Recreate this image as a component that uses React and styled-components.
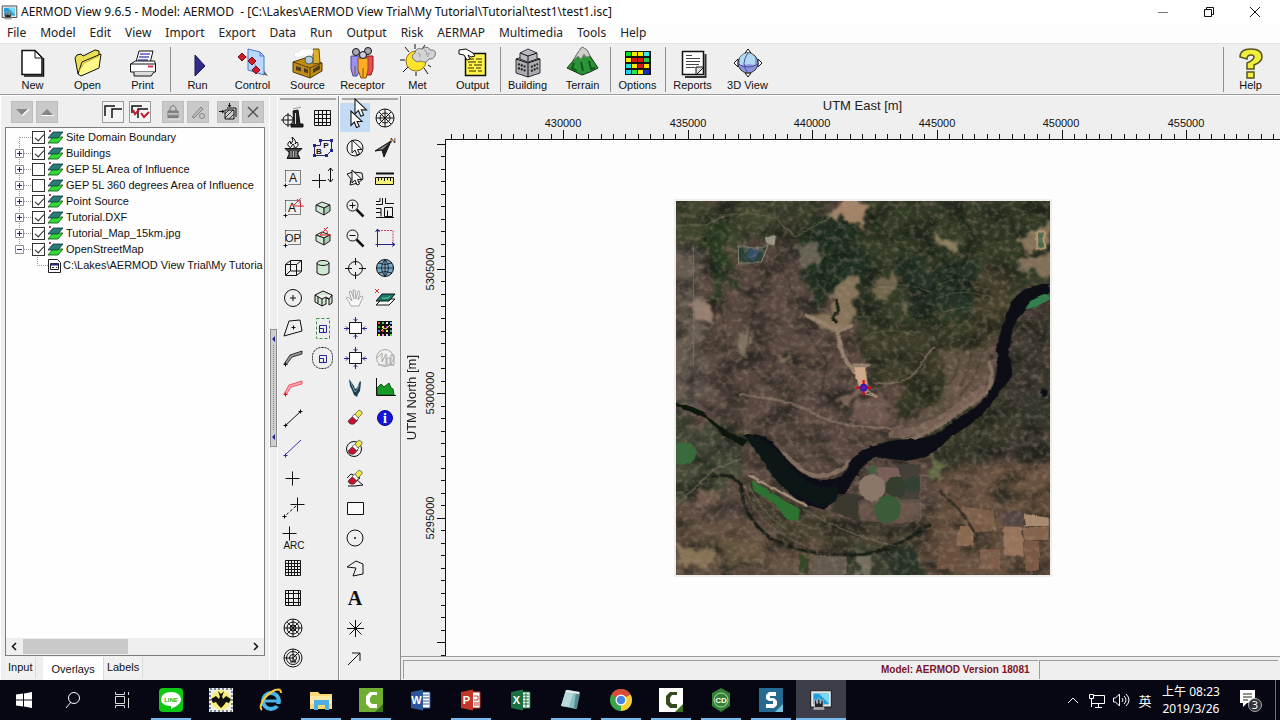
import React, { useState } from "react";
import styled, { createGlobalStyle, css } from "styled-components";

const GlobalStyle = createGlobalStyle`
  * { box-sizing: border-box; }
  body {
    margin: 0;
    background: #fff;
    color: #1a1a1a;
    font-family: "Liberation Sans", Arial, sans-serif;
    font-size: 11px;
  }
  button {
    font: inherit;
    color: inherit;
    background: none;
    border: 0;
    padding: 0;
  }
  svg { display: block; flex: none; }
`;

/* ---------- frame ---------- */

const Page = styled.div`
  display: flex;
  flex-direction: column;
  min-height: 100vh;
  background: #efefef;
`;

const TitleBar = styled.header`
  display: flex;
  align-items: center;
  height: 24px;
  padding: 0 2px 0 1px;
  gap: 3px;
  background: #fff;
`;

const TitleText = styled.h1`
  flex: 1;
  margin: 0;
  font: 400 12px/16px "Noto Sans", sans-serif;
  color: #111;
  white-space: pre;
`;

const WindowButtons = styled.div`
  display: flex;
`;

const WindowButton = styled.button`
  display: grid;
  place-items: center;
  width: 46px;
  height: 22px;
`;

const MenuBar = styled.nav`
  display: flex;
  align-items: flex-start;
  height: 19px;
  background: #fdfdfd;
`;

const MenuItem = styled.button`
  padding: 0 7px;
  font: 400 12px/17px "Noto Sans", sans-serif;
  color: #222;
`;

const Toolbar = styled.div`
  display: flex;
  height: 52px;
  padding: 1px 2px 0 5px;
  background: #efefef;
  border-top: 1px solid #e2e2e2;
  border-bottom: 1px solid #9a9a9a;
`;

const ToolbarButton = styled.button`
  position: relative;
  display: flex;
  flex-direction: column;
  align-items: center;
  justify-content: flex-end;
  width: 55px;
  height: 47px;
  line-height: 13px;
  color: #111;
  ${(p) => p.$divided && css`
    &::before {
      content: "";
      position: absolute;
      left: 0;
      top: 2px;
      bottom: 0;
      width: 1px;
      background: #8e8e8e;
    }
  `}
`;

const Spacer = styled.div`
  flex: 1;
`;

const Workspace = styled.main`
  display: flex;
  flex: 1;
  min-height: 0;
  border-top: 1px solid #fff;
`;

/* ---------- overlay panel ---------- */

const SidePanel = styled.aside`
  display: flex;
  flex-direction: column;
  width: 270px;
  padding: 0 4px;
  border-left: 1px solid #fff;
  border-right: 1px solid #fff;
`;

const PanelTools = styled.div`
  display: flex;
  gap: 3px;
  height: 31px;
  padding: 5px 0 4px 6px;
`;

const PanelButton = styled.button`
  display: grid;
  place-items: center;
  width: 22px;
  height: 22px;
  margin-left: ${(p) => (p.$gap ? p.$gap : 0)}px;
  background: ${(p) => (p.$active ? "#f4f4f4" : "#c9c9c9")};
  border: 1px solid ${(p) => (p.$active ? "#9c9c9c" : "#bdbdbd")};
`;

const TreeBox = styled.section`
  display: flex;
  flex-direction: column;
  flex: 1;
  background: #fefefe;
  border: 1px solid #7d7d7d;
  overflow: hidden;
`;

const Tree = styled.ul`
  flex: 1;
  margin: 0;
  padding: 1px 0 0 8px;
  list-style: none;
`;

const TreeRow = styled.li`
  display: flex;
  align-items: center;
  height: 16px;
  padding-left: ${(p) => (p.$child ? 20 : 0)}px;
  white-space: nowrap;
`;

const TreeLabel = styled.label`
  display: flex;
  align-items: center;
  gap: ${(p) => (p.$tight ? 1 : 3)}px;
  line-height: 16px;
  color: #111;
`;

const TreeCheck = styled.input`
  appearance: none;
  position: relative;
  width: 13px;
  height: 13px;
  margin: 0;
  background: #fff;
  border: 1px solid #333;
  &:checked::before {
    content: "";
    position: absolute;
    left: 4px;
    top: 0;
    width: 4px;
    height: 8px;
    border: solid #222;
    border-width: 0 1px 1px 0;
    transform: rotate(42deg);
  }
`;

const ScrollBar = styled.div`
  display: flex;
  align-items: center;
  height: 17px;
  background: #efefef;
`;

const ScrollArrow = styled.button`
  display: grid;
  place-items: center;
  width: 17px;
  height: 17px;
`;

const ScrollTrack = styled.div`
  flex: 1;
  height: 15px;
`;

const ScrollThumb = styled.div`
  width: 47%;
  height: 100%;
  background: #c9c9c9;
`;

const TabStrip = styled.div`
  display: flex;
  align-items: flex-start;
  height: 24px;
  padding-top: 1px;
`;

const Tab = styled.button`
  height: ${(p) => (p.$active ? 23 : 21)}px;
  padding: ${(p) => (p.$active ? "2px 8px 0" : "0 3px")};
  margin-right: ${(p) => (p.$roomy ? 7 : 0)}px;
  background: ${(p) => (p.$active ? "#fff" : "#f1f1f1")};
  border-right: 1px solid #dadada;
  line-height: 19px;
  color: #111;
`;

const Splitter = styled.div`
  display: flex;
  flex-direction: column;
  width: 7px;
  padding-top: 233px;
`;

const SplitHandle = styled.button`
  display: grid;
  place-items: center;
  width: 7px;
  height: 118px;
  background: #cfcfcf;
  border: 1px solid #8d8d8d;
`;

/* ---------- tool palettes ---------- */

const Palette = styled.div`
  display: grid;
  grid-template-columns: 30px 30px;
  grid-auto-flow: column;
  grid-template-rows: 7px repeat(19, 30px);
  width: 62px;
  border-right: 1px solid #8d8d8d;
  border-left: 1px solid #fff;
`;

const Gripper = styled.div`
  grid-column: 1 / 3;
  grid-row: 1;
  height: 4px;
  margin: 0 2px;
  border-bottom: 2px solid #a8a8a8;
`;

const PaletteButton = styled.button`
  position: relative;
  display: grid;
  place-items: center;
  width: 30px;
  height: 29px;
  grid-column: ${(p) => p.$col};
  grid-row: ${(p) => p.$row};
  background: ${(p) => (p.$active ? "#c4dcf3" : "transparent")};
`;

const PointerLayer = styled.span`
  position: absolute;
  left: 14px;
  top: -5px;
  z-index: 2;
`;

/* ---------- map ---------- */

const MapPane = styled.section`
  display: grid;
  flex: 1;
  grid-template-columns: 44px 1fr;
  grid-template-rows: 43px 1fr 24px;
  min-width: 0;
`;

const TopAxis = styled.div`
  grid-column: 2;
  grid-row: 1;
  display: flex;
  flex-direction: column;
  align-items: center;
  padding-top: 2px;
  overflow: hidden;
`;

const AxisTitle = styled.div`
  font-size: 13px;
  line-height: 16px;
  color: #222;
`;

const LeftAxis = styled.div`
  grid-column: 1;
  grid-row: 2;
  display: flex;
  align-items: center;
  overflow: hidden;
`;

const SideTitle = styled(AxisTitle)`
  writing-mode: vertical-rl;
  transform: rotate(180deg);
  width: 16px;
  margin-left: 3px;
`;

const MapCanvas = styled.div`
  grid-column: 2;
  grid-row: 2;
  display: flex;
  align-items: center;
  justify-content: center;
  padding-bottom: 21px;
  background: #fdfdfd;
  border-top: 1px solid #111;
  border-left: 1px solid #111;
`;

const ImageFrame = styled.div`
  border: 2px solid #efeeea;
`;

const StatusBar = styled.footer`
  grid-column: 1 / 3;
  grid-row: 3;
  display: grid;
  grid-template-columns: 636fr 240fr;
  gap: 1px;
  padding: 3px 2px 1px;
  border-top: 1px solid #9c9c9c;
`;

const StatusCell = styled.div`
  padding-right: 8px;
  border-top: 1px solid #9c9c9c;
  border-left: 1px solid #9c9c9c;
  font-size: 10px;
  font-weight: 700;
  line-height: 17px;
  text-align: right;
  color: #7b1428;
`;

/* ---------- taskbar ---------- */

const Taskbar = styled.footer`
  display: flex;
  height: 40px;
  background: #060712;
  color: #fff;
`;

const TaskButton = styled.button`
  position: relative;
  display: grid;
  place-items: center;
  width: ${(p) => (p.$narrow ? 48 : 50)}px;
  height: 40px;
  background: ${(p) => (p.$current ? "#3d3e49" : "transparent")};
  ${(p) => p.$open && css`
    &::after {
      content: "";
      position: absolute;
      left: ${p.$current ? 0 : 5}px;
      right: ${p.$current ? 0 : 5}px;
      bottom: 0;
      height: 2px;
      background: #76b9ed;
    }
  `}
`;

const Tray = styled.div`
  display: flex;
  align-items: center;
  margin-left: auto;
  font-family: "Noto Sans", "Noto Sans CJK TC", sans-serif;
`;

const TrayButton = styled.button`
  display: grid;
  place-items: center;
  width: ${(p) => p.$w || 24}px;
  height: 40px;
  font-size: 13px;
`;

const Clock = styled.time`
  width: 68px;
  text-align: center;
  font-size: 12px;
  line-height: 17px;
`;

const ShowDesktop = styled.button`
  width: 5px;
  height: 40px;
  border-left: 1px solid #6d6e76;
`;

/* ---------- drawing helpers ---------- */

const Ico = ({ s = 24, children, ...r }) => (
  <svg width={s} height={s} viewBox={`0 0 ${s} ${s}`} fill="none" stroke="#111" aria-hidden="true" {...r}>
    {children}
  </svg>
);

const Plus = ({ x, y, r = 3, c }) => <path d={`M${x - r} ${y}h${2 * r}M${x} ${y - r}v${2 * r}`} stroke={c} />;

const ARROW = "M0 0V13L3 10L5 15L7.500 14L5.500 9.500H10Z";
const Cube = () => (
  <g fill="#cfe8d2" stroke="#222">
    <path d="M5 9l6-3 8 3-6 3z" />
    <path d="M5 9v6l8 4v-7z" />
    <path d="M13 12l6-3v6l-6 4z" fill="#a9cdb0" />
  </g>
);
const Angle = ({ x, y }) => <path d={`M${x + 8} ${y}l-8 8h11M${x + 4} ${y + 1}q4 3 4 8`} stroke="#e0202f" />;
const DotBox = ({ children }) => (
  <>
    <path d="M4.500 4.500h15v14h-13M4.500 4.500v12" strokeDasharray="1 1" />
    <Plus x={4.5} y={19.5} r={2} />
    {children}
  </>
);
const Letter = ({ x = 12, y = 16, size = 12, children, ...r }) => (
  <text x={x} y={y} fontSize={size} textAnchor="middle" fill="#111" stroke="none" {...r}>{children}</text>
);
const Eraser = () => (
  <g stroke="#333" strokeWidth=".6">
    <path d="M5 15l5-5 5 4-4 4q-3 1-5-1z" fill="#c8102e" />
    <path d="M9 10.500l3-2.500 4 4-2.500 2.500z" fill="#fff" />
    <path d="M12 8l4-4 3 2v2l-4 4z" fill="#f2e84a" />
  </g>
);
const BlueSquare = () => (
  <g stroke="#24249a"><path d="M8.500 9.500h7v7h-7z" /><path d="M8.500 12.500h4v4h-4z" /></g>
);
const Extents = () => (
  <>
    <path d="M6.500 6.500h12v11h-12z" fill="#fff" />
    <g stroke="#26268f">
      <path d="M12.500 6V1M12.500 18v5M6 12.500H1M19 12.500h5" />
      <path d="M10.500 3l2 2 2-2M10.500 21l2-2 2 2M3 10.500l2 2-2 2M22 10.500l-2 2 2 2" />
    </g>
  </>
);

const leftPalette = [
  ["Point source", 1, <Ico><circle cx="7" cy="14" r="5" /><path d="M0 14h14M7 7v14" /><path d="M12 5l5-1 2 14h3v3H10v-3h3z" fill="#222" /><path d="M14.500 7v11" stroke="#ddd" /><path d="M12 3l8-2" stroke="#999" /></Ico>],
  ["Flare source", 1, <Ico><path d="M4 12.500h17l-3 3h-1v3l2 4H6l2-4v-3H7z" fill="#444" /><path d="M10 12Q4 9 9 5l1 3q3-3 1-7 5 4 3 7l2-2q3 4-2 6M10 11q1-2 2-3 2 2 1 4" fill="#eee" /><path d="M10 15v6M12.500 15v6M15 15v6" stroke="#bbb" /></Ico>],
  ["Area source", 1, <Ico><DotBox><Letter>A</Letter></DotBox></Ico>],
  ["Rotated area source", 1, <Ico><DotBox><Letter x={11}>A</Letter><Angle x={12} y={2} /></DotBox></Ico>],
  ["Open pit", 1, <Ico><DotBox><Letter size={11}>OP</Letter></DotBox></Ico>],
  ["Volume source", 1, <Ico><path d="M4.500 8.500h11v11h-11zM4.500 8.500l5-4h11v11l-5 4M15.500 8.500l5-4M9.500 5v10H20M9 15l-4 4" /></Ico>],
  ["Circular area", 1, <Ico><circle cx="12" cy="12" r="8.500" /><Plus x={12} y={12} /></Ico>],
  ["Polygon area", 1, <Ico><path d="M8 5l11-1 2 11-18 5z" /><Plus x={12.5} y={11.5} r={2} /></Ico>],
  ["Line source", 1, <Ico><path d="M3 18l6-9 12-4v3l-10 3-6 8" fill="#999" strokeWidth=".8" /><Plus x={4.5} y={18.5} r={2} /></Ico>],
  ["Road source", 1, <Ico><path d="M3 18l5-9 13-4v3l-11 3-5 8" stroke="#ef3347" fill="#f6aab2" strokeWidth=".8" /><Plus x={4.5} y={18.5} r={2} c="#d11" /></Ico>],
  ["Line segment", 1, <Ico><path d="M4 20L20 5" /><Plus x={4.5} y={19.5} r={2} /><Plus x={19.5} y={5.5} r={2} /></Ico>],
  ["Buoyant line", 1, <Ico><path d="M4 19L20 4" stroke="#3a3aa8" /><Plus x={4.5} y={19.5} r={2} c="#26268f" /></Ico>],
  ["Discrete receptor", 1, <Ico><Plus x={11.5} y={12.5} r={7} /></Ico>],
  ["Receptor line", 1, <Ico><Plus x={16.5} y={8.5} r={7} /><path d="M15 10L4 20" strokeDasharray="3 2" /><Plus x={3.5} y={20.5} r={2} /></Ico>],
  ["Receptor arc", 1, <Ico><Plus x={8.5} y={7.5} r={7} /><Letter x={13} y={23} size={10}>ARC</Letter></Ico>],
  ["Cartesian grid", 1, <Ico><path d="M4.500 4.500h15v15h-15zM7.500 4v16M10.500 4v16M13.500 4v16M16.500 4v16M4 7.500h16M4 10.500h16M4 13.500h16M4 16.500h16" /></Ico>],
  ["Non-uniform grid", 1, <Ico><path d="M4.500 4.500h15v15h-15zM7.500 4v16M12.500 4v16M17.500 4v16M4 7.500h16M4 12.500h16M4 16.500h16" /></Ico>],
  ["Polar grid", 1, <Ico><circle cx="12" cy="12" r="9" /><circle cx="12" cy="12" r="6" /><circle cx="12" cy="12" r="3" /><path d="M3 12h18M12 3v18M6 6l12 12M18 6L6 18" /></Ico>],
  ["Non-uniform polar grid", 1, <Ico><circle cx="12" cy="12" r="9" /><circle cx="12" cy="12" r="6.500" /><circle cx="12" cy="12" r="3.500" /><path d="M12 3v13M3 12h9l6-6M12 12l3 4H9" /></Ico>],
  ["Uniform grid", 2, <Ico><path d="M3.500 4.500h16v15h-16zM7.500 4v16M11.500 4v16M15.500 4v16M3 8.500h17M3 12.500h17M3 16.500h17" /></Ico>],
  ["Plant boundary", 2, <Ico><path d="M3.500 9.500h6v-5h11v10l-5 5h-12z" stroke="#25256e" /><path d="M2 9.500h3M8 4.500h3M19 4.500h3M2 19.500h3M14 19.500h3M19 14.500h3" strokeWidth="3" stroke="#25258a" /><Letter x={8} y={18} size={8} fontWeight="700">B</Letter><Letter x={15} y={12} size={8} fontWeight="700">P</Letter></Ico>],
  ["Move receptor", 2, <Ico><path d="M1 14.500h14M8.500 8v14M19.500 2v14M17 5l2.500-3L22 5M17 13l2.500 3 2.500-3" /></Ico>],
  ["Building", 2, <Ico><Cube /></Ico>],
  ["Rotated building", 2, <Ico><Cube /><Angle x={9} y={1} /></Ico>],
  ["Tank", 2, <Ico fill="#cfe8d2"><path d="M6 7v10q6 4 12 0V7" /><ellipse cx="12" cy="7" rx="6" ry="2.500" /></Ico>],
  ["Polygon building", 2, <Ico fill="#cfe8d2"><path d="M4 9l8-4 9 4v8l-3 2v-6l-3-1v6l-4 2-7-4zM4 9l7 4 4-2 3 2 3-4M11 13v7M7 11v6" /></Ico>],
  ["Select rectangle", 2, <Ico><path d="M5.500 2.500h13v20h-13z" stroke="#3a9149" strokeDasharray="3 2" /><BlueSquare /></Ico>],
  ["Select circle", 2, <Ico><rect x="1.500" y="1.500" width="20" height="21" rx="9" strokeDasharray="2 1" /><BlueSquare /></Ico>],
];

const rightPalette = [
  ["Select", 1, <Ico><path d={ARROW} transform="translate(8 5) scale(1.1)" fill="#fff" /></Ico>],
  ["Select in circle", 1, <Ico><circle cx="12" cy="12" r="8" /><path d={ARROW} transform="translate(9 4)" fill="#fff" /></Ico>],
  ["Select in polygon", 1, <Ico><path d="M4 8l6-2 9 1 1 6-5 4-8 2 1-6z" /><path d={ARROW} transform="translate(9 4)" fill="#fff" /></Ico>],
  ["Zoom in", 1, <Ico><circle cx="9.500" cy="9.500" r="5.500" /><Plus x={9.5} y={9.5} /><path d="M13.500 13.500l7 7" strokeWidth="2.500" /></Ico>],
  ["Zoom out", 1, <Ico><circle cx="9.500" cy="9.500" r="5.500" /><path d="M6.500 9.500h6" /><path d="M13.500 13.500l7 7" strokeWidth="2.500" /></Ico>],
  ["Centre", 1, <Ico><circle cx="12.500" cy="12.500" r="7" /><path d="M2 12.500h7M16 12.500h7M12.500 2v7M12.500 16v7" /></Ico>],
  ["Pan", 1, <Ico stroke="#aaa"><path d="M8 20Q6 15 3 12l2-1 4 4L6 6l2-1 3 8-1-9h2l1 9 2-8 2 1-2 8 3-4 2 1-4 9z" fill="#f8f8f8" /></Ico>],
  ["Zoom extents", 1, <Ico><Extents /></Ico>],
  ["Zoom site", 1, <Ico><Extents /></Ico>],
  ["Fly over", 1, <Ico stroke="none"><path d="M6 3l5 7 1 3 2-1 3-7 1 1-1 9-2 3-1 3-3-2-2-5-2-4z" fill="#1d3f54" /><path d="M8 7l4 9 2-2 2-5" stroke="#7592a0" /></Ico>],
  ["Delete", 1, <Ico><Eraser /></Ico>],
  ["Delete in circle", 1, <Ico><circle cx="11" cy="13" r="7.500" /><Eraser /></Ico>],
  ["Delete in polygon", 1, <Ico><path d="M4 12l4-4 9 4-3 2 6 5-8 1H5" /><Eraser /></Ico>],
  ["Rectangle", 1, <Ico><path d="M4.500 6.500h16v12h-16z" fill="#fafafa" /></Ico>],
  ["Circle", 1, <Ico><circle cx="12" cy="12" r="8" /><circle cx="12" cy="12" r="1" fill="#111" stroke="none" /></Ico>],
  ["Polygon", 1, <Ico><path d="M4 11l9-6 7 3v10l-10 2 3-8z" /></Ico>],
  ["Text", 1, <Ico><Letter y={19} size={20} fontFamily="Liberation Serif, serif" fontWeight="700">A</Letter></Ico>],
  ["Marker", 1, <Ico><path d="M4 12.500h17M12.500 4v17M6.500 6.500l12 12M18.500 6.500l-12 12" /></Ico>],
  ["Arrow", 1, <Ico><path d="M5 19L17 7M9 7h8v8" /></Ico>],
  ["Wind rose", 2, <Ico><circle cx="12" cy="12" r="9" /><circle cx="12" cy="12" r="5" /><path d="M3 12h18M12 3v18M6 6l12 12M18 6L6 18" /></Ico>],
  ["North arrow", 2, <Ico><path d="M2 15L18 5l-7 16-2-7z" fill="#222" /><path d="M5 14l11-7-6 6z" fill="#999" stroke="none" /><Letter x={20} y={7} size={8}>N</Letter></Ico>],
  ["Measure", 2, <Ico><path d="M3 7.500h18" strokeWidth="2" /><path d="M2.500 11.500h18v7h-18z" fill="#f4f07d" /><path d="M5.500 12v3M8.500 12v2M11.500 12v3M14.500 12v2M17.500 12v3" /></Ico>],
  ["Streets", 2, <Ico><path d="M3 5.500h4V2M9.500 2v6.500H3M12.500 2v5.500H21M3 12.500h5v8M3 16.500h5M3 21.500h18M11.500 20.500v-9h8v9zM14.500 14.500v6" /></Ico>],
  ["Domain", 2, <Ico><path d="M5 4.500h15v15" stroke="#d33a63" strokeDasharray="2 1" /><path d="M4.500 3v18M2.500 18.500H22M2.500 6l2-3 2 3M19 16.500l3 2-3 2" stroke="#26268f" /></Ico>],
  ["Web map", 2, <Ico><circle cx="12" cy="12" r="8.500" fill="#79aacb" /><path d="M3.500 12h17M12 3v18M5 7q7 3 14 0M5 17q7-3 14 0M12 3.500q-7 8 0 17M12 3.500q7 8 0 17" strokeWidth=".8" /></Ico>],
  ["Overlays", 2, <Ico><path d="M3 19l6-6h13l-6 6z" fill="#fff" /><path d="M3 15l6-7h13l-6 7z" fill="#16786a" /><path d="M9 12h6l2-2" stroke="#7cc7ac" /><path d="M2 3l4 4M6 3L2 7" stroke="#c33" /></Ico>],
  ["Colour grid", 2, <Ico stroke="none"><path d="M4 5h15v15H4z" fill="#111" />{["#f44", "#4c4", "#eee", "#6cf", "#3a3", "#ee4", "#c3c", "#ccc", "#48f", "#e33", "#ee4", "#4aa", "#ee4", "#f9c", "#ddd", "#4d4"].map((c, i) => <rect key={i} x={5 + (i % 4) * 4} y={6 + Math.floor(i / 4) * 4} width="2" height="2" fill={c} />)}<path d="M8 15l3-3 2 1 4-4" stroke="#ee4" fill="none" /></Ico>],
  ["Clock chart", 2, <Ico stroke="#aaa"><circle cx="12" cy="12" r="8.500" /><path d="M4 12l5-5v9l4-8v10M14 19v-7h3v7M18 19V9h3v10zM5 19h16" /></Ico>],
  ["Profile", 2, <Ico><path d="M4 19v-7l4-4 3 3 5-4 2 5 2 1 1 6z" fill="#189a28" stroke="#0b5416" /><path d="M3.500 2v17.500H23" /></Ico>],
  ["Information", 2, <Ico><circle cx="12" cy="12" r="7.500" fill="#1414dd" stroke="#0a0a8a" /><Letter y={17} size={14} fontFamily="Liberation Serif, serif" fontWeight="700" style={{ fill: "#fff" }}>i</Letter></Ico>],
];

/* ---------- main toolbar ---------- */

const cells = ["#00dc20", "#ffe800", "#ffe800", "#40e8f0", "#ffe800", "#d81818", "#d81818", "#20d040", "#20e0e0", "#ffe800", "#d81818", "#ffe800", "#20d0f0", "#30e050", "#ffe800", "#1030c8"];

const mainTools = [
  ["New", 0, <Ico s={32}><path d="M5 3.500h13l7 7v17H5z" fill="#fff" strokeWidth="1.500" /><path d="M18 4v7h7z" fill="#fff" /><path d="M26.500 11v18H7" strokeWidth="1.500" /></Ico>],
  ["Open", 0, <Ico s={32}><path d="M6 27L3 11l2-3 4-1 2 2L23 3l4 1v6" fill="#e8df52" /><path d="M6 27l4-12L29 7l-2 14-18 8z" fill="#fff98a" /><path d="M7 24l5-8L27 9" stroke="#c3a82b" /></Ico>],
  ["Print", 0, <Ico s={32}><path d="M9 15L12 4h14l-3 12" fill="#fff" /><path d="M13 7h10M12 10h10M11 13h10" stroke="#5454c4" strokeWidth="1.500" /><path d="M3.500 17l5-3h19l1 3-3 5H4z" fill="#fff" /><path d="M3.500 17h25v8h-25z" fill="#fff" /><path d="M7 25v4h17l3-4" fill="#ddd" /><path d="M21 19.500h5" stroke="#e03050" strokeWidth="2" /></Ico>],
  ["Run", 1, <Ico s={32}><path d="M13 8l10 11-10 10z" fill="#312c8c" stroke="#18164f" /></Ico>],
  ["Control", 0, <Ico s={32}><path d="M31 29l-6-8v6z" fill="#555" stroke="none" /><path d="M11 2l12 3 4 4v19l-16-5z" fill="#b9d7ff" stroke="#477bc4" /><path d="M23 5v4h4" stroke="#477bc4" /><path d="M5 10h5l7 5 3 8" stroke="#a88" /><path d="M5 6l4 4-4 4-4-4zM15 10l4 4-4 4-4-4zM19 19l4 4-4 4-4-4z" fill="#cf1b25" stroke="#731016" /></Ico>],
  ["Source", 0, <Ico s={32}><path d="M1 15l12-4 17 5v8l-12 7L1 25z" fill="#c08c15" stroke="#4d390a" /><path d="M21 2h6l1 14-7 1z" fill="#dfae28" stroke="#664c0a" /><path d="M1 15l17 6v10M18 21l12-5" stroke="#573e08" /><path d="M4 19l5 1.500v4L4 23zM12 21l4 1.500v4L12 25zM21 22l7-4v4l-7 4z" fill="#4b3e20" stroke="none" /><path d="M2 9Q1 4 7 5q2-5 8-3 7-2 6 4-3 5-10 3-6 3-9 0" fill="#fff" stroke="#e4e4e4" /><circle cx="17" cy="13" r="4" fill="#b4c9e6" stroke="#465" /></Ico>],
  ["Receptor", 0, <Ico s={32}><path d="M4 9h9v13l-3 7H6l-2-7z" fill="#9b91f5" stroke="#4a4294" /><path d="M18 9h8v13l-2 6h-5z" fill="#f04a59" stroke="#841820" /><path d="M11 11h10v12l-2 8h-5l-3-8z" fill="#ffad25" stroke="#83520a" /><path d="M16 21v9M8 19v9" stroke="#87500e" /><circle cx="9" cy="5" r="3.500" fill="#a9a9b4" /><circle cx="21" cy="4" r="3.500" fill="#a9a9b4" /><circle cx="16" cy="8" r="3.500" fill="#ccd" /></Ico>],
  ["Met", 0, <Ico s={36}><path d="M15 1v5M5 4l4 5M0 17h5M3 29l5-5M16 33v-4M28 31l-4-6M31 24l-3-2M25 2l-3 4" /><circle cx="16" cy="18" r="10" fill="#ffe22b" stroke="#8b7211" /><path d="M14 17q-4-4 1-7 1-6 7-4 6-4 8 1 7-1 5 6-2 4-6 3-3 5-8 2-4 2-7-1" fill="#d4d4d4" stroke="#777" /><path d="M18 10q3 1 2 4M24 7q4 1 2 5M30 10q-3 0-2 4" stroke="#999" /></Ico>],
  ["Output", 0, <Ico s={32}><path d="M8.500 6.500h20v22h-20z" fill="#fff44b" strokeWidth="1.500" /><path d="M12 12h5M19 12h6M11 15h8M21 15h4M12 18h3M17 18h8M11 21h6M19 21h5M12 24h7M21 24h4" stroke="#776c18" strokeWidth="1.500" /><path d="M2 3l7-1 7 4 2 3-4 1-3-2 2 4-3 1-3-5-5-1z" fill="#fff" /></Ico>],
  ["Building", 1, <Ico s={32}><path d="M4 12l12-4 12 4v14l-12 4-12-4z" fill="#aaaab2" stroke="#333" /><path d="M4 12l12 4 12-4M16 16v14" /><path d="M8 6l8-4 9 4v6l-9 3-8-3z" fill="#bbbbc4" stroke="#333" /><path d="M8 6l8 3 9-3M16 9v5" /><path d="M6 17l8 3M6 21l8 3M19 20l7-3M19 24l7-3" stroke="#222" strokeWidth="2" strokeDasharray="2 1" /></Ico>],
  ["Terrain", 0, <Ico s={34}><path d="M1 23q6-6 10-14l5-7 5 3 3 6 8 12-8 4-8 3z" fill="#2c9336" stroke="#162c17" /><path d="M8 15l3-6 5-7 5 3 3 6-4 1-2-3-3 5-3-3z" fill="#d0d0cb" stroke="#888" /><path d="M8 18l-2 5 5 3M15 17l2 9M23 16l2 8 4-1" stroke="#0c5c1c" strokeWidth="2" /></Ico>],
  ["Options", 1, <Ico s={32}><path d="M3 4h26v24H3z" fill="#151515" stroke="none" />{cells.map((c, i) => <rect key={i} x={4 + (i % 4) * 6} y={5 + Math.floor(i / 4) * 6} width="5" height="4" fill={c} stroke="none" />)}</Ico>],
  ["Reports", 1, <Ico s={32}><path d="M5.500 4.500h21v23h-21z" fill="#fff" strokeWidth="1.500" /><path d="M9 8.500h6M9 11.500h14M9 14.500h14M9 17.500h13M9 20.500h9" stroke="#444" /><path d="M19 28v-8h8z" fill="#ddd" /><path d="M28.500 7v23H8" stroke="#333" strokeWidth="2" /></Ico>],
  ["3D View", 0, <Ico s={32}><path d="M16 2l3 4h-6zM16 30l3-4h-6zM2 16l4-4v8zM30 16l-4-4v8z" fill="#fff" /><circle cx="16" cy="16" r="10" fill="#8c94dd" stroke="#333" /><path d="M8 10q8-8 15 0v8q-8-2-15 1z" fill="#b2d9f2" stroke="none" /><path d="M6 17q10 6 20 0M16 6q-8 11 0 20" stroke="#4a4d9c" /></Ico>],
];

/* ---------- satellite imagery ---------- */

const Satellite = () => (
  <svg width="374" height="374" viewBox="48 47 1122 1120" preserveAspectRatio="none" role="img" aria-label="Satellite base map">
    <defs>
      <filter id="ragged" x="-10%" y="-10%" width="120%" height="120%">
        <feTurbulence type="fractalNoise" baseFrequency=".03" numOctaves="4" seed="7" />
        <feDisplacementMap in="SourceGraphic" scale="50" xChannelSelector="R" yChannelSelector="G" />
        <feGaussianBlur stdDeviation="3" />
      </filter>
      <filter id="soft" x="-20%" y="-20%" width="140%" height="140%">
        <feTurbulence type="fractalNoise" baseFrequency=".014" numOctaves="4" seed="3" />
        <feDisplacementMap in="SourceGraphic" scale="110" xChannelSelector="R" yChannelSelector="G" />
        <feGaussianBlur stdDeviation="8" />
      </filter>
      <filter id="edge">
        <feTurbulence type="fractalNoise" baseFrequency=".05" numOctaves="2" seed="5" />
        <feDisplacementMap in="SourceGraphic" scale="10" xChannelSelector="R" yChannelSelector="G" />
        <feGaussianBlur stdDeviation="1" />
      </filter>
      <filter id="dark" x="0" y="0" width="100%" height="100%" colorInterpolationFilters="sRGB">
        <feTurbulence type="fractalNoise" baseFrequency=".012 .018" numOctaves="6" seed="12" />
        <feColorMatrix values="0 0 0 0 .06  0 0 0 0 .08  0 0 0 0 .06  2.6 0 0 0 -1.050" />
      </filter>
      <filter id="light" x="0" y="0" width="100%" height="100%" colorInterpolationFilters="sRGB">
        <feTurbulence type="fractalNoise" baseFrequency=".06" numOctaves="4" seed="31" />
        <feColorMatrix values="0 0 0 0 .68  0 0 0 0 .6  0 0 0 0 .52  0 2.6 0 0 -1.150" />
      </filter>
    </defs>
    <path d="M48 47h1122v1120H48z" fill="#594840" />
    <g filter="url(#soft)">
      <path d="M20 20h480l-60 130-240 40-150 70z" fill="#40442f" />
      <path d="M20 180h110v500H20z" fill="#655a51" />
      <path d="M140 110h60l20 170-60 80z" fill="#293b23" />
      <path d="M400 120l200-80h600v240l-120 40-70 140-170 40-190 20-80-120 20-60-150-40z" fill="#303a28" />
      <path d="M450 120h140l50 160-160 80-60-90z" fill="#213320" />
      <path d="M720 230h220v160H750z" fill="#213125" />
      <path d="M590 420l210-10 190 60-30 80-320 60z" fill="#3d3e2c" />
      <path d="M960 260l100-10-20 200-120 20z" fill="#46432f" />
      <path d="M720 600l180-60-40 130-160 30z" fill="#303423" />
      <path d="M1060 380h140v430h-330l90-160 70-110z" fill="#403b32" />
      <path d="M800 700l230-80 100 90-160 120-140 30z" fill="#38382b" />
      <path d="M20 680l220 60 20 160-240 70z" fill="#454937" />
      <path d="M250 900l300 100 300 20-140 90H430z" fill="#474233" />
      <path d="M20 980l320 50 180 60v110H20z" fill="#635142" />
      <path d="M860 860l340-50v380H760l20-120z" fill="#67513f" />
      <path d="M560 1090h230v100H560z" fill="#3c4331" />
    </g>
    <path d="M48 47h1122v1120H48z" filter="url(#dark)" opacity=".6" />
    <g filter="url(#ragged)" opacity=".9">
      <path d="M500 90l60-45 60 15-5 80-25-25-40-10z" fill="#b08d70" />
      <path d="M555 270h40l-5 120-30 40-45 10-70-50 80-10-15-60z" fill="#8d7a5f" />
      <path d="M650 280l50-20 25 30-50 60-30-20z" fill="#796c53" />
      <path d="M720 350l30-10-10 50z" fill="#6a6750" />
      <path d="M825 130l25 30 50 5-15 45-30-30-35-15z" fill="#948664" />
      <path d="M1070 165l60-30 45-25v60l-40 20-40 10z" fill="#917b61" />
      <path d="M1085 220l95-20v80l-60-20-50-10z" fill="#8c7861" />
      <path d="M90 350l50-5 25 70-50-5z" fill="#9c8576" />
      <path d="M225 445l40-20 10 55-30 20z" fill="#857766" />
      <path d="M410 190l60-20 10 60-50 10z" fill="#6c6658" />
      <path d="M830 500l170-20 5 90-70 90-100 70-120 20 80-80 70-60z" fill="#755f53" opacity=".7" />
      <path d="M590 640l80-10 20 80-110-5z" fill="#705951" />
      <path d="M120 910l60-5-20 50-50 5z" fill="#735d51" />
      <path d="M50 1080l120 20-10 40-110-10z" fill="#9b8562" opacity=".8" />
      <path d="M180 1060l120 10 20 60-120 5z" fill="#706044" opacity=".6" />
      <path d="M600 1090l40 15-10 60h-40z" fill="#8b8172" opacity=".8" />
      <path d="M680 1085l90 5 10 80-80 5z" fill="#263025" />
      <path d="M810 800l40 30-5 60-35-10z" fill="#617044" />
      <path d="M530 660l70-70-30 70z" fill="#80695d" />
      <path d="M360 510l30-10-20 40z" fill="#8a7462" />
    </g>
    <g filter="url(#edge)">
      <path d="M234 182l60 8 30-10-20 50-68 4z" fill="#2a4038" stroke="#8a8577" strokeWidth="3" />
      <path d="M270 190l30 5-20 30-20-10z" fill="#35506a" />
      <path d="M315 153l33-3-5 30-25-5z" fill="#999587" />
      <path d="M1128 140l24-2 4 50-26 5z" fill="#4c6a47" stroke="#b69675" strokeWidth="6" />
      <path d="M905 960l95 15 10 60-90 5z" fill="#8a6a52" opacity=".7" />
      <path d="M1028 975h60v45h-60z" fill="#554542" />
      <path d="M1092 985l74 10v25h-72z" fill="#a98a6e" />
      <path d="M1030 1022h56l5 90-60-5z" fill="#97735c" />
      <path d="M900 1020h40v60h-50z" fill="#876850" />
      <path d="M1092 1022h74v40h-74z" fill="#84634d" />
      <path d="M1092 1065h45v90h-40z" fill="#795844" />
      <path d="M840 1080h60v70h-70z" fill="#6b503e" />
      <path d="M960 1090h60v60h-60z" fill="#7b5d48" />
      <path d="M417 1105h28v57h-28z" fill="#344527" />
      <path d="M460 1105h100v62H460z" fill="#625a50" />
      <path d="M350 70h60v70h-60zM345 180h40v60h-40z" fill="#39372b" opacity=".6" />
      <path d="M1088 630h82v80h-82z" fill="#2e3026" opacity=".6" />
    </g>
    <g fill="none" strokeLinecap="round" filter="url(#edge)">
      <path d="M100 180v360M48 120h90q80-60 210-20l60 55 120-70" stroke="#858069" strokeWidth="3" opacity=".6" />
      <path d="M440 390l95 45q0 70 48 125" stroke="#93806c" strokeWidth="12" />
      <path d="M575 420l-35 15" stroke="#93806c" strokeWidth="10" />
      <path d="M583 540h40" stroke="#93806c" strokeWidth="14" />
      <path d="M240 628q150 10 220 55t260 45" stroke="#887465" strokeWidth="8" opacity=".7" />
      <path d="M640 590q90 15 130-35l50-70" stroke="#877760" strokeWidth="5" opacity=".7" />
      <path d="M845 500q10 60-25 110M890 500q20 50-30 100M930 490q10 50-30 110M960 520q-10 60-60 110" stroke="#40362d" strokeWidth="7" opacity=".5" />
      <path d="M310 765q70 45 115 85t125 0q30-45 130-70t140-50q90-60 140-95t30-100" stroke="#8b7767" strokeWidth="12" opacity=".8" />
      <path d="M700 745q90 0 190-75 60-40 80-60" stroke="#806a5c" strokeWidth="26" opacity=".7" />
      <path d="M48 960l115-110 80-30M430 970q120 70 250 105" stroke="#817767" strokeWidth="4" opacity=".7" />
      <path d="M160 870q60-10 85 30-5 85 90 160 110 55 275 45 90-10 200-90" stroke="#171b14" strokeWidth="9" />
      <path d="M265 890q40 110 160 165M280 885q50 90 170 140M255 900q30 120 180 180" stroke="#7b7058" strokeWidth="4" opacity=".6" />
      <path d="M840 915l70 70 40 65" stroke="#2c2a22" strokeWidth="7" />
      <path d="M530 345l5 30-20 20 15 15" stroke="#171b11" strokeWidth="9" />
      <path d="M270 870l170 90" stroke="#b39c85" strokeWidth="6" />
      <path d="M640 300q110-10 170 20M620 450q80-30 140 0M830 340q80-40 170 0M820 390q90-40 180-10M840 430q80-30 140 10M830 300q60-30 120-10" stroke="#5b5d43" strokeWidth="4" opacity=".6" />
      <path d="M640 100l80 90 140 20M740 90l60 70 90 120M560 110l-60 80-20 120M900 90l40 60-30 90" stroke="#141f12" strokeWidth="8" opacity=".5" />
      <path d="M1000 680q-60 60-40 120M1080 830l40-150" stroke="#1c2117" strokeWidth="8" opacity=".5" />
      <path d="M360 200l-70 130-30 170-60 100M350 50v150l70 170M440 440l60 90-20 120M180 350l20 150-40 100" stroke="#2e2b22" strokeWidth="4" opacity=".5" />
    </g>
    <path d="M48 47h1122v1120H48z" filter="url(#light)" opacity=".35" />
    <g filter="url(#edge)">
      <path d="M48 652q60 8 90 35t55 45 70 30l-15 20-60-35-50-50-90-35z" fill="#10140f" />
      <path d="M250 745q75-5 110 50 55 75 110 85 60 10 90-25 10-50 60-65 70-35 150-30 80-15 110-55 60-25 105-80 35-45 25-145 15-60 40-125 40-60 118-60v30l-65 45q-50 35-50 100-10 30-3 60 20 55-25 75-30 60-80 100l-80 55q-50 60-130 65-60-10-95-10-60 50-90 120l-60 35q-30-5-80-30-70-55-90-100z" fill="#090b13" />
      <path d="M250 745q80 5 150 110 70 70 130 40l10 50-50 20q-110-40-155-100z" fill="#101915" />
      <path d="M1095 372q20-42 74-45v15q-30 20-74 30z" fill="#338050" />
      <path d="M275 885l145 85-5 35-35-5q-35-55-100-85z" fill="#2e7231" />
      <path d="M650 845h68v50h-68z" fill="#785f59" />
      <path d="M720 835h62v115h-62z" fill="#444039" />
      <path d="M600 940h180v65q-100 15-180-5z" fill="#75605390" />
      <path d="M535 925h60v80l-80-30z" fill="#3b382f" />
      <circle cx="636" cy="905" r="40" fill="#8a7768" />
      <circle cx="707" cy="903" r="31" fill="#343d2e" />
      <circle cx="759" cy="895" r="22" fill="#304034" />
      <circle cx="682" cy="970" r="40" fill="#3a5b38" />
      <circle cx="637" cy="850" r="13" fill="#456040" />
      <path d="M48 770h28a32 32 0 0 1 0 65H48z" fill="#3b6b3c" />
      <circle cx="1152" cy="622" r="11" fill="#0c0e18" />
      <path d="M582 545h34l12 90-30-25z" fill="#d0a98b" />
      <path d="M622 615l30 16-35-5z" fill="#443c3a" stroke="#a78f7a" strokeWidth="4" />
      <path d="M782 870v130M782 870h60" stroke="#8b7867" strokeWidth="2" />
    </g>
    <path d="M588 606h46M611 583v46" stroke="#e20613" strokeWidth="7" />
    <circle cx="611" cy="606" r="10" fill="#5b1aa8" stroke="#2415a8" strokeWidth="3" />
  </svg>
);

/* ---------- axes ---------- */

const STEP = 12.46;
const eastLabels = [430000, 435000, 440000, 445000, 450000, 455000];
const northLabels = [null, 5305000, 5300000, 5295000, null];

const EastScale = () => (
  <svg width="100%" height="25" fontSize="11" textAnchor="middle" fill="#111" aria-hidden="true">
    {Array.from({ length: 67 }, (_, i) => {
      const x = Math.round(7 + i * STEP);
      const major = i % 10 === 9;
      return <rect key={i} x={x - 1} y={major ? 16 : 20} width="1" height="9" />;
    })}
    {eastLabels.map((n, i) => <text key={n} x={Math.round(118 + i * STEP * 10)} y="13">{n}</text>)}
  </svg>
);

const NorthScale = () => (
  <svg width="25" height="100%" fontSize="11" textAnchor="middle" fill="#111" aria-hidden="true">
    {Array.from({ length: 42 }, (_, i) => {
      const major = i % 10 === 0;
      return <rect key={i} x={major ? 17 : 21} y={Math.round(5 + i * STEP)} width="9" height="1" />;
    })}
    {northLabels.map((n, i) => n && (
      <text key={n} transform={`translate(10 ${Math.round(5 + i * STEP * 10)}) rotate(-90)`} y="4">{n}</text>
    ))}
  </svg>
);

/* ---------- tree ---------- */

const overlays = [
  ["Site Domain Boundary", true, ""],
  ["Buildings", true, "+"],
  ["GEP 5L Area of Influence", false, "+"],
  ["GEP 5L 360 degrees Area of Influence", false, "+"],
  ["Point Source", true, "+"],
  ["Tutorial.DXF", true, "+"],
  ["Tutorial_Map_15km.jpg", true, "+"],
  ["OpenStreetMap", true, "-"],
];

const Expander = ({ sign, first, last }) => (
  <svg width="18" height="16" viewBox="0 0 18 16" fill="none" aria-hidden="true">
    <path d={`M5.500 ${first ? 8 : 0}V${last ? 8 : 16}M6 8.500h12`} stroke="#999" strokeDasharray="1 1" />
    {sign && <path d="M1.500 4.500h8v8h-8z" fill="#fff" stroke="#909090" />}
    {sign && <path d={sign === "+" ? "M3 8.500h5M5.500 6v5" : "M3 8.500h5"} stroke="#25255e" />}
  </svg>
);

const LayerIcon = () => (
  <svg width="15" height="14" viewBox="0 0 15 14" aria-hidden="true">
    <path d="M0 13l5-6h10l-5 6z" fill="#33dc35" stroke="#064f12" strokeWidth=".8" />
    <path d="M0 8l5-6h10l-5 6z" fill="#2b7b78" stroke="#073b37" strokeWidth=".8" />
    <path d="M1 0h2v2H1z" fill="#c23753" />
  </svg>
);

const panelButtons = [
  ["Move down", false, 0, <Ico s={18} stroke="none"><path d="M3 6h12l-6 6z" fill="#858585" /><path d="M15 6l-6 6 1 1 7-7z" fill="#fff" /></Ico>],
  ["Move up", false, 0, <Ico s={18} stroke="none"><path d="M3 12h12L9 6z" fill="#858585" /><path d="M3 12h13v1H4z" fill="#fff" /></Ico>],
  ["Hide all", true, 41, <Ico s={20} strokeWidth="1.500"><path d="M2 14V4h10M9 16V7h10" /></Ico>],
  ["Show all", true, 2, <Ico s={20} strokeWidth="1.500"><path d="M2 11V4h10M8 16V7h10" /><path d="M3 8l2 4 4-4M11 11l3 4 5-5" stroke="#c71831" strokeWidth="2" /></Ico>],
  ["Lock", false, 8, <Ico s={18} stroke="#777"><path d="M6 8V5q3-5 6 0v3" /><path d="M4 8h10v7H4z" fill="#858585" /><path d="M4 11h10M4 16h12" stroke="#eee" /></Ico>],
  ["Edit", false, 0, <Ico s={18} stroke="#858585"><path d="M3 14L12 4l2 2-9 9z" fill="#bbb" /><circle cx="13" cy="13" r="2.500" /></Ico>],
  ["Add layer", false, 5, <Ico s={20}><path d="M7 8h9v9H7z" fill="#ccc" /><path d="M9 6h9v9M1 9.500h5M11.500 1v4M10 3l1.500 2L13 3M4 8l2 1.500L4 11" /><path d="M7 12l4-4M7 16l8-8M11 17l5-5" strokeWidth=".8" /></Ico>],
  ["Remove layer", false, 0, <Ico s={18} stroke="#555" strokeWidth="1.500"><path d="M4 4l10 10M14 4L4 14" /></Ico>],
];

/* ---------- taskbar icons ---------- */

const AppIcon = ({ s }) => (
  <svg width={s} height={s} viewBox="0 0 22 22" aria-hidden="true">
    <path d="M1.500 2.500h19v15h-19z" fill="#e4e6e8" stroke="#222" />
    <path d="M4 5h14v10H4z" fill="#1f9ed8" />
    <path d="M9 5h9v9z" fill="#7fd8f5" />
    <path d="M5 18v-7h2v3h1v-4h2v4h1v-3h2v7z" fill="#222" stroke="#ccc" strokeWidth=".7" />
    <path d="M4 18h10v2H4z" fill="#aaa" />
  </svg>
);

const OfficeIcon = ({ letter, color, children }) => (
  <Ico stroke="none">
    <path d="M11 4h10v16H11z" fill="#fff" stroke={color} />
    {children}
    <path d="M2 4l12-2.500v21L2 20z" fill={color} />
    <text x="7.500" y="16" fontSize="11" fontWeight="700" fill="#fff" textAnchor="middle">{letter}</text>
  </Ico>
);

const CamtasiaIcon = ({ bg, ink }) => (
  <Ico stroke="none">
    <path d="M0 0h24v24H0z" fill={bg} />
    <path d="M18 7V4h-7L7 8v8l4 4h7v-4h-5l-2-2v-4l2-3z" fill={ink} />
    <path d="M16 24h8v-8z" fill="#3f6f20" />
  </Ico>
);

const tasks = [
  ["LINE", 1, <Ico stroke="none"><rect width="24" height="24" rx="4" fill="#0fc814" /><path d="M12 4c6 0 10 3.500 10 7.500 0 5-6 7-10 9.500v-3C5 18 2 15 2 11.500 2 7.500 6 4 12 4" fill="#fff" /><text x="12" y="14" fontSize="6" fontWeight="700" fill="#0fb814" textAnchor="middle">LINE</text></Ico>],
  ["The Bat", 0, <Ico stroke="none"><path d="M0 0h24v24H0z" fill="#eee" /><path d="M1 1h22v22H1z" stroke="#123" strokeDasharray="2 2" /><circle cx="12" cy="12" r="10" fill="#f5ed79" /><path d="M2 11l5-3 3 3 1-3h2l1 3 3-3 5 3-2 4-3-1-2 3-3 3-3-3-2-3-3 1zM9 3l3 3 3-3-2 6h-2z" fill="#111" /></Ico>],
  ["Internet Explorer", 0, <Ico><circle cx="12" cy="13" r="8" stroke="#48b6e9" strokeWidth="4" /><path d="M5 13h16" stroke="#48b6e9" strokeWidth="3" /><path d="M14 16h8v4z" fill="#060712" stroke="none" /><path d="M3 22C-1 19 5 7 16 2q6-2 6 3" stroke="#f6c93c" strokeWidth="2" /></Ico>],
  ["File Explorer", 1, <Ico stroke="none"><path d="M1 4h8l2 2h12v15H1z" fill="#f8d978" /><path d="M1 8h22v8H1z" fill="#ffe9a5" /><path d="M5 12h15v10h-4v-5H9v5H5z" fill="#4eafe8" /></Ico>],
  ["Camtasia", 1, <CamtasiaIcon bg="#70ae32" ink="#fff" />],
  ["Word", 0, <OfficeIcon letter="W" color="#2b579a"><path d="M14 7h6M14 10h6M14 13h6M14 16h6" stroke="#2b579a" /></OfficeIcon>],
  ["PowerPoint", 1, <OfficeIcon letter="P" color="#c23727"><path d="M15 15h5M15 17h5M15 8h4v4h-4" stroke="#c23727" /></OfficeIcon>],
  ["Excel", 0, <OfficeIcon letter="X" color="#1d6f42"><path d="M14 7h6M14 10h6M14 13h6M14 16h6M17 5v14" stroke="#1d6f42" /></OfficeIcon>],
  ["Notepad", 1, <Ico stroke="none"><path d="M7 2l14 2-4 17-15-3z" fill="#86bfc5" /><path d="M7 2l8 1-5 16-8-1z" fill="#b8d8d9" /><path d="M17 4l4 1-3 16-3-1z" fill="#5b858f" /><path d="M7 3l13 2" stroke="#eee" strokeWidth="2" /></Ico>],
  ["Chrome", 1, <Ico stroke="none"><circle cx="12" cy="12" r="11" fill="#3ca44b" /><path d="M12 12L2.500 6.500a11 11 0 0 1 19 0z" fill="#dd493a" /><path d="M12 12l9.500-5.500A11 11 0 0 1 12 23z" fill="#f8cf32" /><circle cx="12" cy="12" r="5.500" fill="#fff" /><circle cx="12" cy="12" r="4.300" fill="#4684e8" /></Ico>],
  ["Camtasia Recorder", 1, <CamtasiaIcon bg="#fff" ink="#354a1e" />],
  ["CorelDRAW", 1, <Ico stroke="none"><path d="M12 0l9 5v13l-9 6-9-6V5z" fill="#327f36" /><circle cx="12" cy="12" r="7" stroke="#b6d9a3" /><text x="12" y="15" fontSize="8" fontWeight="700" fill="#fff" textAnchor="middle">CD</text></Ico>],
  ["Snagit", 1, <Ico stroke="none"><path d="M0 0h24v24H0z" fill="#256a91" /><path d="M17 4h-7L7 7v4l3 2h4v3H7v4h8l3-3v-4l-3-3h-4V8h6z" fill="#fff" /><path d="M16 24h8v-8z" fill="#79bfda" /></Ico>],
  ["AERMOD View", 2, <AppIcon s={24} />],
];

const menus = ["File", "Model", "Edit", "View", "Import", "Export", "Data", "Run", "Output", "Risk", "AERMAP", "Multimedia", "Tools", "Help"];

function PaletteTools({ tools, pointer }) {
  let row = { 1: 1, 2: 1 };
  return (
    <Palette>
      <Gripper />
      {tools.map(([name, col, icon]) => {
        row[col] += 1;
        const active = name === "Select";
        return (
          <PaletteButton key={name} aria-label={name} $col={col} $row={row[col]} $active={active}>
            {icon}
            {active && pointer && (
              <PointerLayer>
                <svg width="15" height="20" viewBox="0 0 15 20" aria-hidden="true">
                  <path d={ARROW} transform="translate(1 1) scale(1.150)" fill="#fff" stroke="#222" />
                </svg>
              </PointerLayer>
            )}
          </PaletteButton>
        );
      })}
    </Palette>
  );
}

export default function App() {
  const [checked, setChecked] = useState(overlays.map((o) => o[1]));
  const toggle = (i) => setChecked(checked.map((c, k) => (k === i ? !c : c)));

  return (
    <Page>
      <GlobalStyle />
      <TitleBar>
        <AppIcon s={17} />
        <TitleText>{"AERMOD View 9.6.5 - Model: AERMOD  - [C:\\Lakes\\AERMOD View Trial\\My Tutorial\\Tutorial\\test1\\test1.isc]"}</TitleText>
        <WindowButtons>
          <WindowButton aria-label="Minimize"><Ico s={12}><path d="M1 6.500h10" stroke="#777" /></Ico></WindowButton>
          <WindowButton aria-label="Restore"><Ico s={12}><path d="M1.500 3.500h7v7h-7zM3.500 3V1.500h7v7H9" /></Ico></WindowButton>
          <WindowButton aria-label="Close"><Ico s={12}><path d="M1 1l10 10M11 1L1 11" /></Ico></WindowButton>
        </WindowButtons>
      </TitleBar>
      <MenuBar>{menus.map((m) => <MenuItem key={m}>{m}</MenuItem>)}</MenuBar>
      <Toolbar>
        {mainTools.map(([name, divided, icon]) => (
          <ToolbarButton key={name} $divided={!!divided}>{icon}{name}</ToolbarButton>
        ))}
        <Spacer />
        <ToolbarButton $divided>
          <Ico s={32}><path d="M5 10q0-8 11-8 11 0 11 8 0 5-8 8v4h-7v-6q7-3 7-6 0-2-3-2-4 0-4 4zM12 25h7v6h-7z" fill="#f1ee3d" stroke="#575320" strokeWidth="1.500" /></Ico>
          Help
        </ToolbarButton>
      </Toolbar>

      <Workspace>
        <SidePanel>
          <PanelTools>
            {panelButtons.map(([name, active, gap, icon]) => (
              <PanelButton key={name} aria-label={name} $active={active} $gap={gap}>{icon}</PanelButton>
            ))}
          </PanelTools>
          <TreeBox>
            <Tree>
              {overlays.map(([name, , sign], i) => (
                <TreeRow key={name}>
                  <Expander sign={sign} first={i === 0} last={i === 7} />
                  <TreeLabel>
                    <TreeCheck type="checkbox" checked={checked[i]} onChange={() => toggle(i)} />
                    <LayerIcon />
                    {name}
                  </TreeLabel>
                </TreeRow>
              ))}
              <TreeRow $child>
                <svg width="14" height="16" viewBox="0 0 14 16" fill="none" aria-hidden="true"><path d="M3.500 0v8.500H14" stroke="#999" strokeDasharray="1 1" /></svg>
                <TreeLabel as="span" $tight>
                  <svg width="14" height="15" viewBox="0 0 14 15" fill="none" stroke="#222" aria-hidden="true"><path d="M.5 1.500h9l3 3v10H.5z" fill="#fff" /><path d="M2.500 5.500h8v6h-8z" /><path d="M3 6.500h7" stroke="#26268f" strokeWidth="2" /><path d="M4 9.500h2M8 9.500h1" /></svg>
                  C:\Lakes\AERMOD View Trial\My Tutoria
                </TreeLabel>
              </TreeRow>
            </Tree>
            <ScrollBar>
              <ScrollArrow aria-label="Scroll left"><Ico s={9} strokeWidth="1.500"><path d="M6 1L2.500 4.500 6 8" /></Ico></ScrollArrow>
              <ScrollTrack><ScrollThumb /></ScrollTrack>
              <ScrollArrow aria-label="Scroll right"><Ico s={9} strokeWidth="1.500"><path d="M3 1l3.500 3.500L3 8" /></Ico></ScrollArrow>
            </ScrollBar>
          </TreeBox>
          <TabStrip>
            <Tab $roomy>Input</Tab>
            <Tab $active>Overlays</Tab>
            <Tab>Labels</Tab>
          </TabStrip>
        </SidePanel>

        <Splitter>
          <SplitHandle aria-label="Collapse panel">
            <svg width="5" height="114" viewBox="0 0 5 114" aria-hidden="true"><path d="M4 5v6L1 8zM4 103v6l-3-3z" fill="#26268f" /><path d="M2.500 14v86" stroke="#8585a8" strokeDasharray="1 1" /></svg>
          </SplitHandle>
        </Splitter>

        <PaletteTools tools={leftPalette} />
        <PaletteTools tools={rightPalette} pointer />

        <MapPane>
          <TopAxis>
            <AxisTitle>UTM East [m]</AxisTitle>
            <EastScale />
          </TopAxis>
          <LeftAxis>
            <SideTitle>UTM North [m]</SideTitle>
            <NorthScale />
          </LeftAxis>
          <MapCanvas>
            <ImageFrame><Satellite /></ImageFrame>
          </MapCanvas>
          <StatusBar>
            <StatusCell>Model: AERMOD Version 18081</StatusCell>
            <StatusCell />
          </StatusBar>
        </MapPane>
      </Workspace>

      <Taskbar>
        <TaskButton $narrow aria-label="Start"><Ico s={16} stroke="none"><path d="M0 2.500l7-1v6H0zM8 1.500L16 0v7.500H8zM0 8.500h7v6l-7-1zM8 8.500h8V16l-8-1.500z" fill="#fff" /></Ico></TaskButton>
        <TaskButton aria-label="Search"><Ico s={18} stroke="#fff"><circle cx="10" cy="7" r="5.500" /><path d="M7 11l-5 6" /></Ico></TaskButton>
        <TaskButton $narrow aria-label="Task view"><Ico s={18} stroke="#ddd"><path d="M2.500 5.500h9v7h-9zM2.500 1v2.500h9V1M2.500 17v-2.500h9V17M15.500 1v3M15.500 7v10" /></Ico></TaskButton>
        {tasks.map(([name, state, icon]) => (
          <TaskButton key={name} aria-label={name} $open={state > 0} $current={state === 2}>{icon}</TaskButton>
        ))}
        <Tray>
          <TrayButton aria-label="Show hidden icons"><Ico s={14} stroke="#fff"><path d="M2 10l5-5 5 5" /></Ico></TrayButton>
          <TrayButton aria-label="Network"><Ico s={18} stroke="#fff"><path d="M5 4.500h11.500v8H4M10.500 13v3M7 16.500h7M1.500 3.500h4v4h-4zM3.500 8v8" /></Ico></TrayButton>
          <TrayButton aria-label="Volume"><Ico s={18} stroke="#fff"><path d="M1.500 7h2l4-4v12l-4-4h-2zM10 7q2 2 0 4M12 5q4 4 0 8M14 3q6 6 0 12" /></Ico></TrayButton>
          <TrayButton aria-label="Input language">英</TrayButton>
          <Clock>上午 08:23<br />2019/3/26</Clock>
          <TrayButton $w={50} aria-label="Notifications">
            <Ico stroke="none">
              <path d="M2 2h15v13H9l-4 4v-4H2z" fill="#fff" /><path d="M5 6h9M5 9h9M5 12h5" stroke="#222" />
              <circle cx="17" cy="17" r="6.500" fill="#30313a" stroke="#aaa" />
              <text x="17" y="21" fontSize="11" fill="#fff" textAnchor="middle">3</text>
            </Ico>
          </TrayButton>
          <ShowDesktop aria-label="Show desktop" />
        </Tray>
      </Taskbar>
    </Page>
  );
}
